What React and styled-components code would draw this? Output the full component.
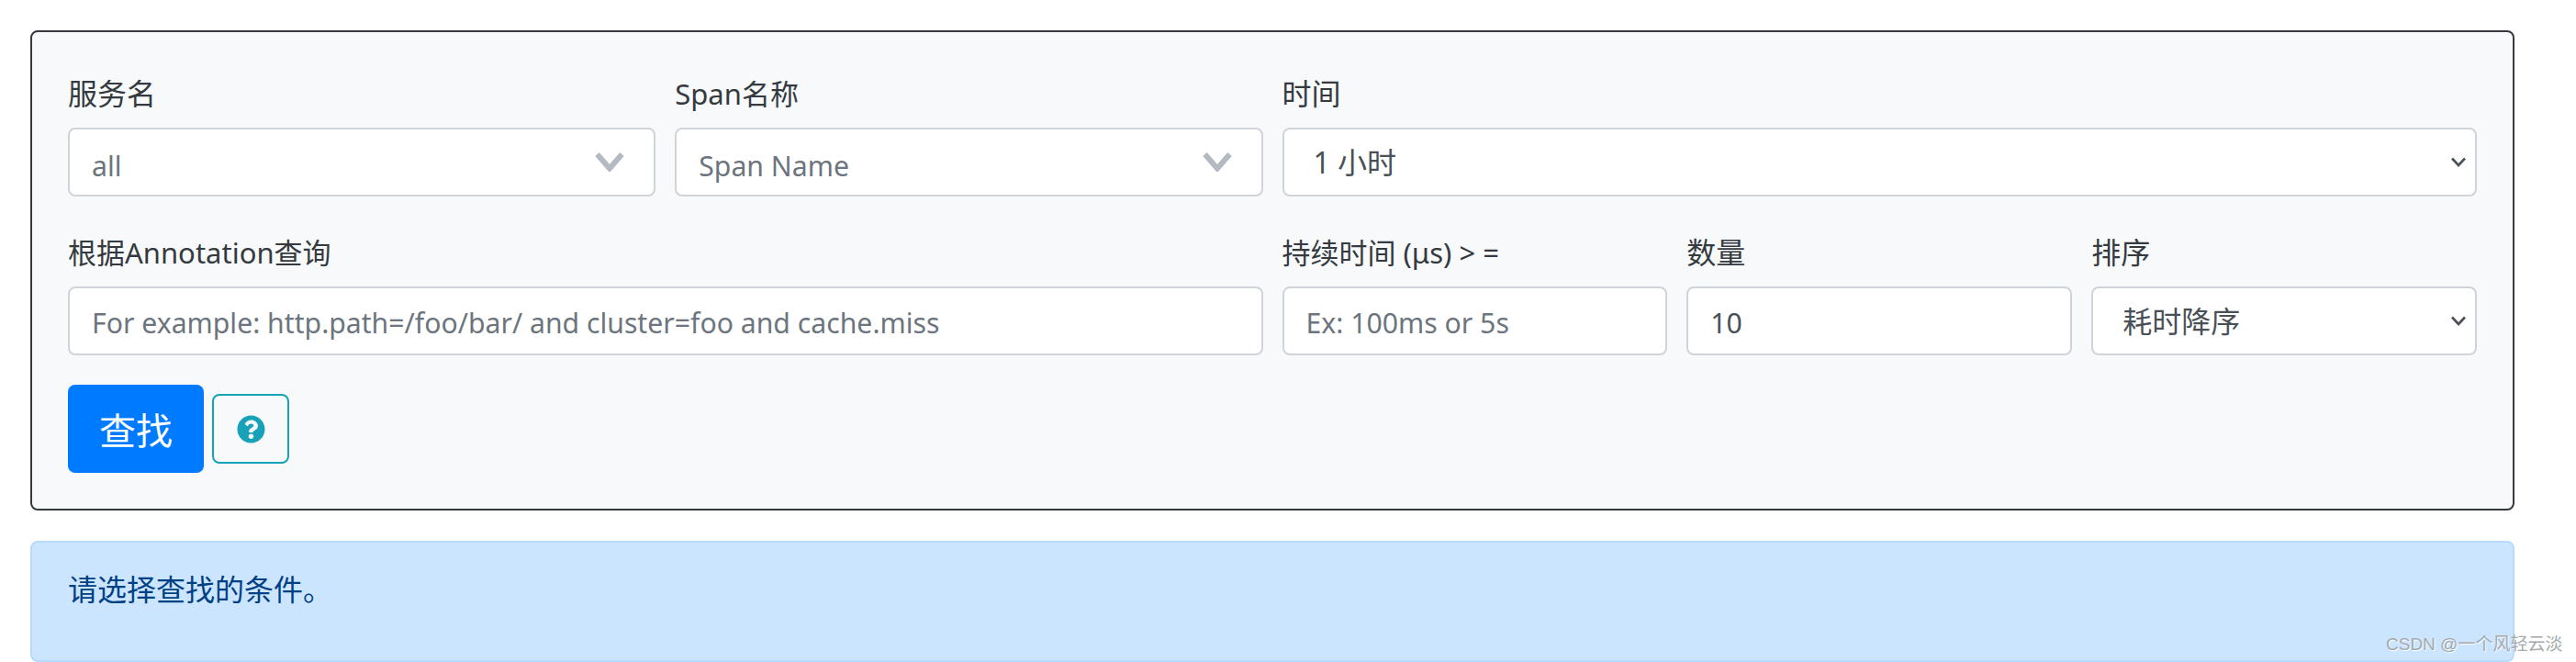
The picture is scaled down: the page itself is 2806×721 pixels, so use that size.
import React from 'react';
import styled, { createGlobalStyle } from 'styled-components';
import { FaQuestionCircle } from 'react-icons/fa';

const GlobalStyle = createGlobalStyle`
  html, body {
    margin: 0;
    height: 721px;
    overflow: hidden;
    background: #fff;
  }
  * { box-sizing: border-box; }
`;

const fontStack = `"Noto Sans", "Noto Sans CJK SC", sans-serif`;

const Page = styled.div`
  position: relative;
  height: 721px;
  padding: 33px 67px 0 33px;
  font-family: ${fontStack};
  font-size: 30.2px;
  line-height: 46px;
  color: #343a40;
`;

const SearchPanel = styled.form`
  height: 523px;
  margin-bottom: 33px;
  padding: 44px 39px 0 39px;
  background: #f8f9fa;
  border: 2px solid #343a40;
  border-radius: 8px;
`;

const FieldGrid = styled.div`
  display: grid;
  grid-template-columns: repeat(12, 1fr);
  column-gap: 21px;
  row-gap: 38px;
`;

const Field = styled.div`
  grid-column: span ${(p) => p.$span};
  min-width: 0;
`;

const Label = styled.label`
  display: block;
  height: 46px;
  margin-bottom: 14px;
  font-size: ${(p) => p.$size || 32}px;
  white-space: nowrap;
`;

const Control = styled.div`
  position: relative;
  height: 75px;
`;

const TextInput = styled.input`
  display: block;
  width: 100%;
  height: 75px;
  padding: 3px 24px 0;
  background: #fff;
  border: 2px solid #ced4da;
  border-radius: 8px;
  font-family: inherit;
  font-size: 30.2px;
  color: #495057;

  &::placeholder {
    color: #6c757d;
    opacity: 1;
  }
`;

const NativeSelect = styled.select`
  display: block;
  width: 100%;
  height: 75px;
  padding: 0 32px;
  appearance: none;
  background: #fff;
  border: 2px solid #ced4da;
  border-radius: 8px;
  font-family: inherit;
  font-size: 32px;
  color: #495057;
`;

const ComboValue = styled.div`
  display: flex;
  align-items: center;
  justify-content: space-between;
  height: 75px;
  padding: 8px 32px 0 24px;
  background: #fff;
  border: 2px solid #ced4da;
  border-radius: 8px;
  color: #6c757d;
`;

const ComboChevron = styled.svg`
  width: 32px;
  height: 22px;
  margin-top: -10px;
  fill: none;
  stroke: #b3bac1;
  stroke-width: 6;
`;

const SelectArrow = styled.svg`
  position: absolute;
  top: 32px;
  right: 12px;
  width: 16px;
  height: 11px;
  fill: none;
  stroke: #495057;
  stroke-width: 2.6;
  pointer-events: none;
`;

const ButtonRow = styled.div`
  display: flex;
  align-items: center;
  gap: 9px;
  margin-top: 32px;
`;

const SearchButton = styled.button`
  width: 148px;
  height: 96px;
  padding: 0;
  background: #007bff;
  border: 0;
  border-radius: 8px;
  font-family: inherit;
  font-size: 40px;
  color: #fff;
`;

const HelpButton = styled.button`
  display: flex;
  align-items: center;
  justify-content: center;
  width: 84px;
  height: 76px;
  padding: 0;
  background: transparent;
  border: 2px solid #17a2b8;
  border-radius: 8px;
  color: #17a2b8;
  font-size: 31px;
`;

const Notice = styled.div`
  height: 132px;
  padding: 28px 39px 0;
  background: #cce5ff;
  border: 2px solid #b8daff;
  border-radius: 8px;
  font-size: 32px;
  color: #004085;
`;

const Watermark = styled.div`
  position: absolute;
  top: 689px;
  left: 2599px;
  font-family: "Liberation Sans", "Noto Sans CJK SC", sans-serif;
  font-size: 19px;
  line-height: 26px;
  white-space: nowrap;
  color: #a4a9ad;
  text-shadow: 1px 1px 1px #fff;
`;

const Combo = ({ value }) => (
  <ComboValue>
    <span>{value}</span>
    <ComboChevron viewBox="0 0 32 22">
      <path d="M2.5 3 L16 18.5 L29.5 3" />
    </ComboChevron>
  </ComboValue>
);

const Select = ({ options }) => (
  <Control>
    <NativeSelect defaultValue={options[0]}>
      {options.map((o) => (
        <option key={o}>{o}</option>
      ))}
    </NativeSelect>
    <SelectArrow viewBox="0 0 16 11">
      <path d="M1 1.5 L8 9 L15 1.5" />
    </SelectArrow>
  </Control>
);

const App = () => {
  return (
    <Page>
      <GlobalStyle />
      <SearchPanel onSubmit={(e) => e.preventDefault()}>
        <FieldGrid>
          <Field $span={3}>
            <Label>服务名</Label>
            <Combo value="all" />
          </Field>
          <Field $span={3}>
            <Label $size={31}>Span名称</Label>
            <Combo value="Span Name" />
          </Field>
          <Field $span={6}>
            <Label>时间</Label>
            <Select options={['1 小时', '2 小时', '6 小时', '12 小时', '1 天']} />
          </Field>
          <Field $span={6}>
            <Label $size={31}>根据Annotation查询</Label>
            <TextInput placeholder="For example: http.path=/foo/bar/ and cluster=foo and cache.miss" />
          </Field>
          <Field $span={2}>
            <Label $size={31}>持续时间 (μs) &gt; =</Label>
            <TextInput placeholder="Ex: 100ms or 5s" />
          </Field>
          <Field $span={2}>
            <Label>数量</Label>
            <TextInput defaultValue="10" />
          </Field>
          <Field $span={2}>
            <Label>排序</Label>
            <Select options={['耗时降序', '耗时升序', '最新', '最早']} />
          </Field>
        </FieldGrid>
        <ButtonRow>
          <SearchButton type="submit">查找</SearchButton>
          <HelpButton type="button" aria-label="help">
            <FaQuestionCircle />
          </HelpButton>
        </ButtonRow>
      </SearchPanel>
      <Notice>请选择查找的条件。</Notice>
      <Watermark>CSDN @一个风轻云淡</Watermark>
    </Page>
  );
};

export default App;
